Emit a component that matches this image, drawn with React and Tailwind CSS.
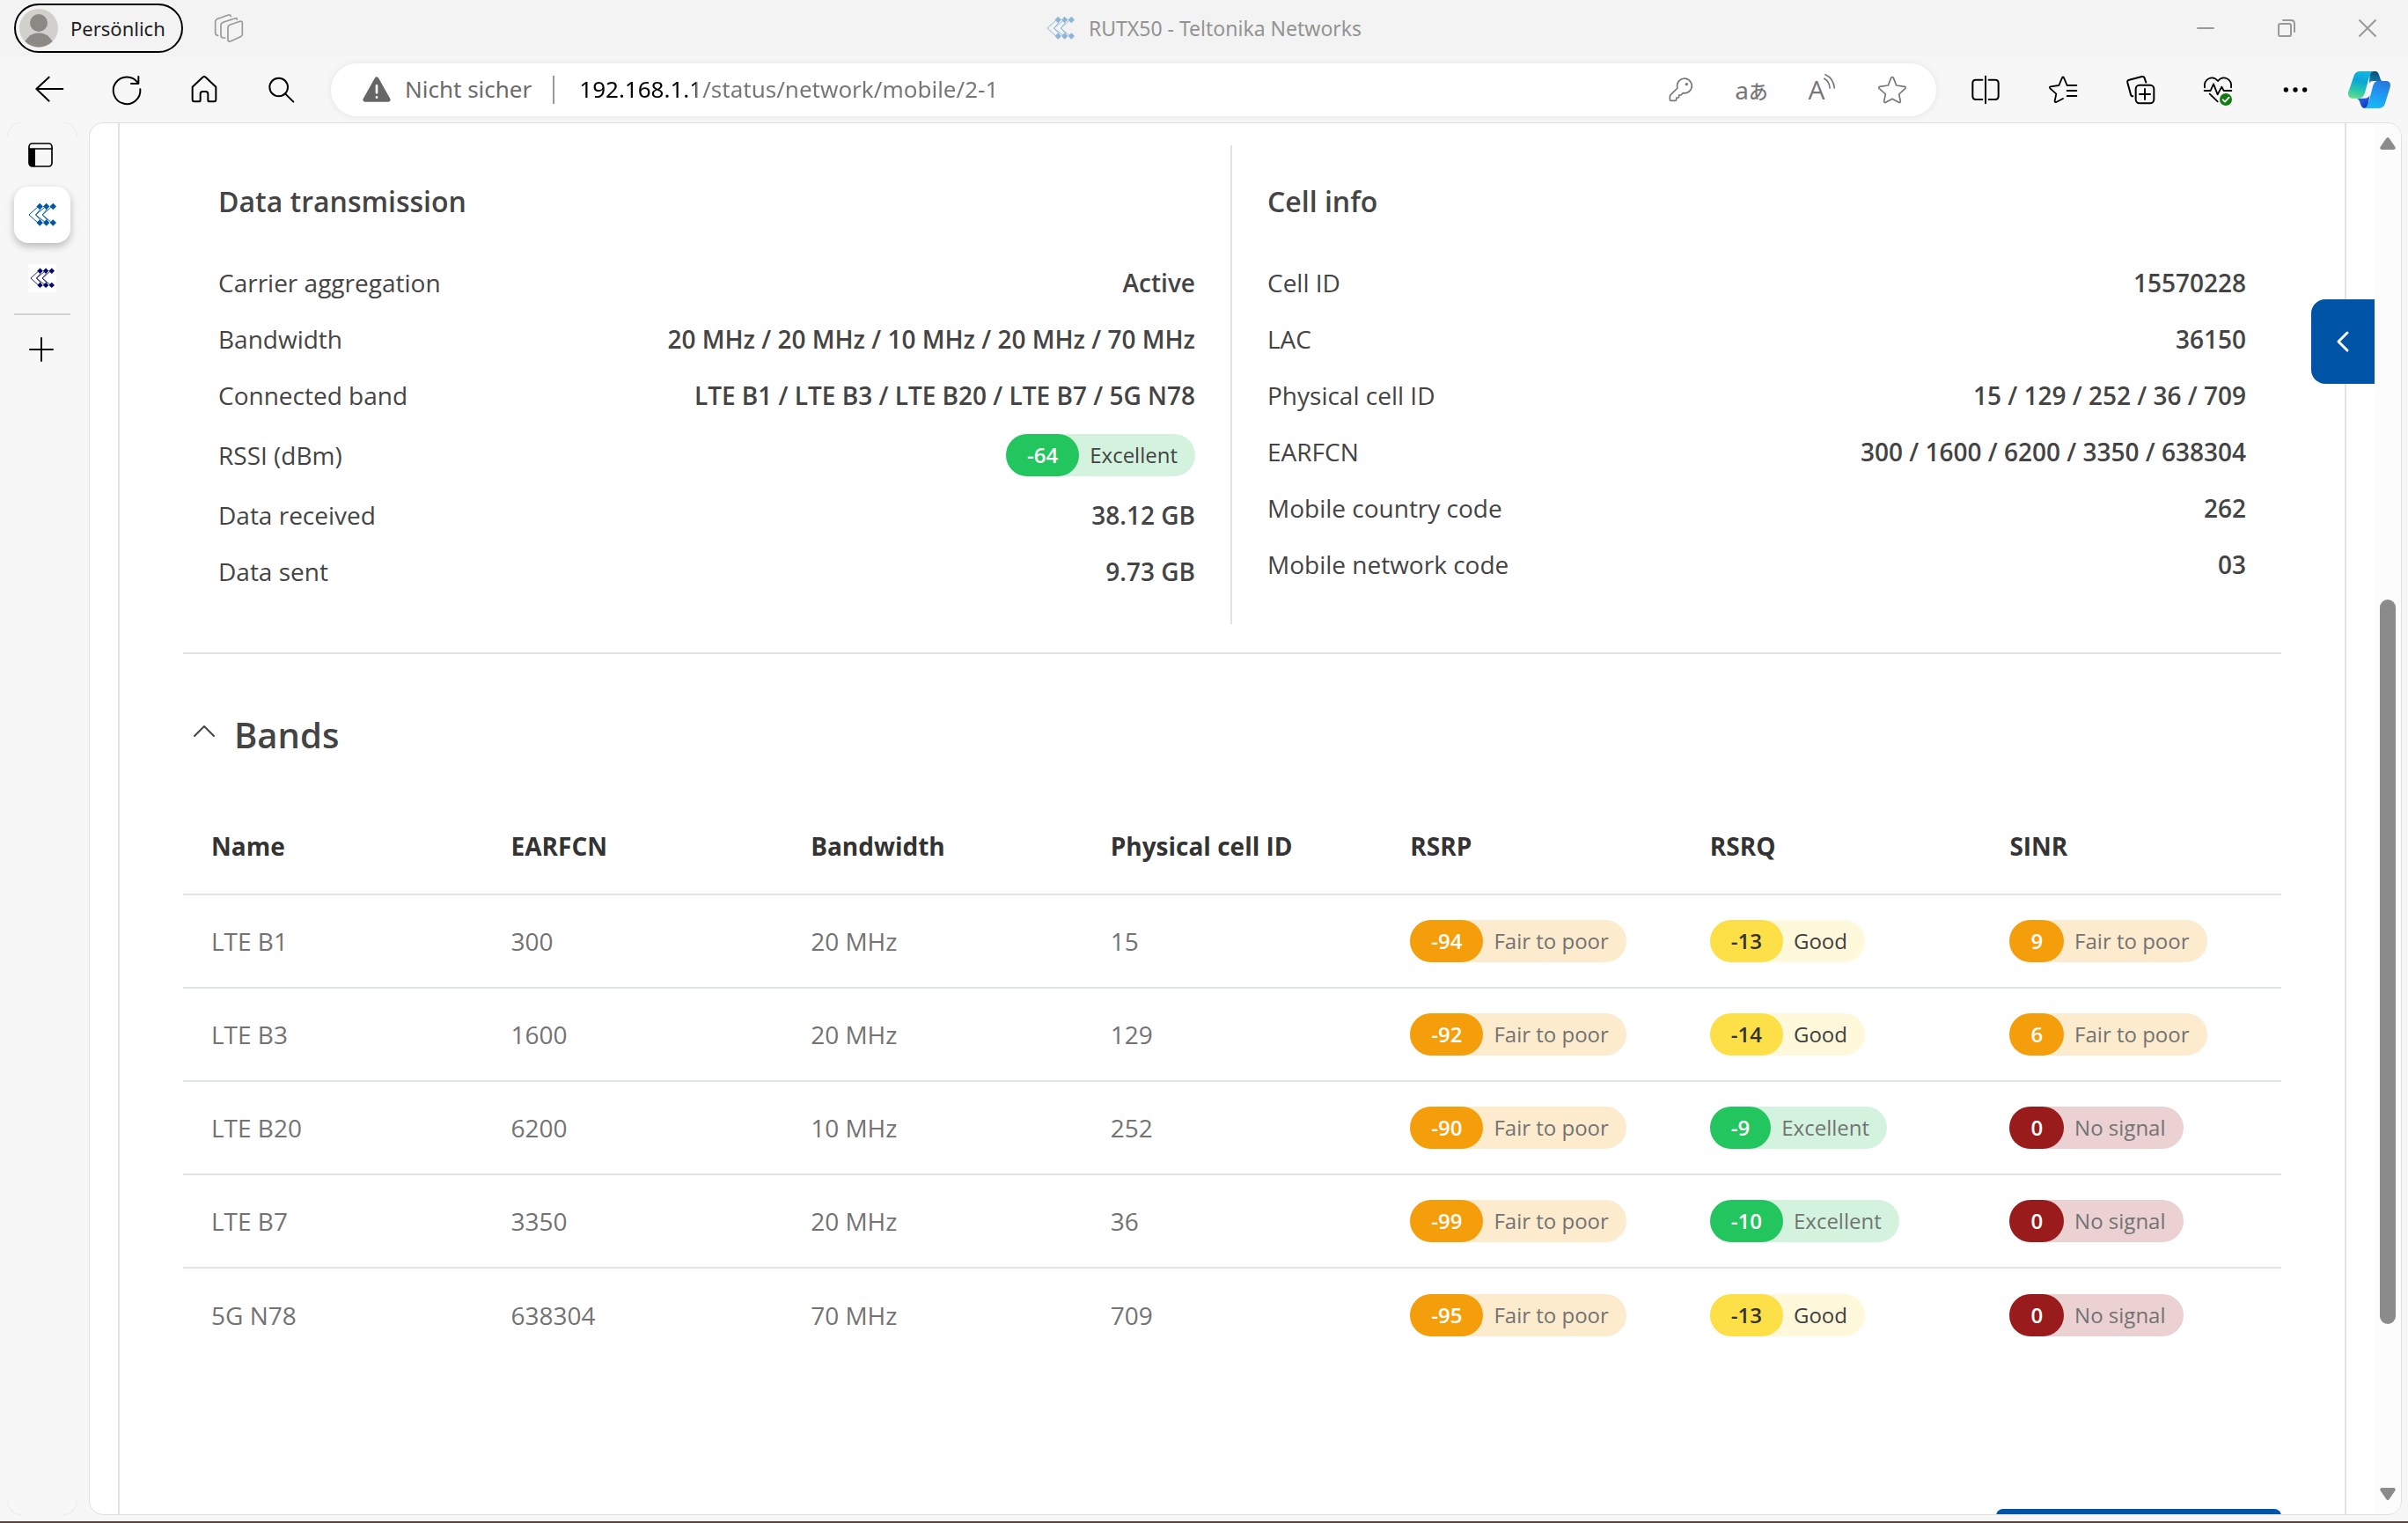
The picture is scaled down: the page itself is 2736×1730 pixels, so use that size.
const transmission = [
  ["Carrier aggregation", "Active"],
  ["Bandwidth", "20 MHz / 20 MHz / 10 MHz / 20 MHz / 70 MHz"],
  ["Connected band", "LTE B1 / LTE B3 / LTE B20 / LTE B7 / 5G N78"],
  ["RSSI (dBm)", { level: "excellent", value: "-64" }],
  ["Data received", "38.12 GB"],
  ["Data sent", "9.73 GB"],
];

const cellInfo = [
  ["Cell ID", "15570228"],
  ["LAC", "36150"],
  ["Physical cell ID", "15 / 129 / 252 / 36 / 709"],
  ["EARFCN", "300 / 1600 / 6200 / 3350 / 638304"],
  ["Mobile country code", "262"],
  ["Mobile network code", "03"],
];

const columns = ["Name", "EARFCN", "Bandwidth", "Physical cell ID", "RSRP", "RSRQ", "SINR"];

const bands = [
  ["LTE B1", "300", "20 MHz", "15", ["fair", "-94"], ["good", "-13"], ["fair", "9"]],
  ["LTE B3", "1600", "20 MHz", "129", ["fair", "-92"], ["good", "-14"], ["fair", "6"]],
  ["LTE B20", "6200", "10 MHz", "252", ["fair", "-90"], ["excellent", "-9"], ["none", "0"]],
  ["LTE B7", "3350", "20 MHz", "36", ["fair", "-99"], ["excellent", "-10"], ["none", "0"]],
  ["5G N78", "638304", "70 MHz", "709", ["fair", "-95"], ["good", "-13"], ["none", "0"]],
];

const levels = {
  excellent: { label: "Excellent", wrap: "bg-[#d3f3df]", badge: "bg-[#23c55e] text-white" },
  good: { label: "Good", wrap: "bg-[#fff8da] text-[#404040]", badge: "bg-[#fde047] text-[#333333]" },
  fair: { label: "Fair to poor", wrap: "bg-[#fdebce]", badge: "bg-[#f59e0b] text-white" },
  none: { label: "No signal", wrap: "bg-[#ebd1d1]", badge: "bg-[#991b1b] text-white" },
};

function SignalPill({ level, value }) {
  const l = levels[level];
  return (
    <span className={`inline-flex h-12 items-center rounded-full pr-5 align-middle text-[24px] leading-[48px] font-normal ${l.wrap}`}>
      <span className={`h-12 rounded-full px-6 font-semibold ${l.badge}`}>{value}</span>
      <span className="ml-3">{l.label}</span>
    </span>
  );
}

function Icon({ children, className = "size-8", width = 6, box = "0 0 96 96" }) {
  return (
    <svg
      viewBox={box}
      className={`shrink-0 overflow-visible ${className}`}
      fill="none"
      stroke="currentColor"
      strokeWidth={width}
      strokeLinecap="round"
      strokeLinejoin="round"
      aria-hidden="true"
    >
      {children}
    </svg>
  );
}

function NetworkLogo({ className }) {
  return (
    <svg viewBox="0 0 32 32" className={`shrink-0 ${className}`} fill="none" stroke="currentColor" strokeWidth="1" aria-hidden="true">
      <path d="M11.500 6.500 1 16l10.500 9.500" />
      <path d="M14 9.500 8.500 16l6 6.500M20 6.500 8.500 16 20 25M21.500 9.500 16.200 16l6 6.500M27 6.500 16.200 16 27 25" strokeWidth="0.9" />
      <path
        stroke="none"
        fill="currentColor"
        d="M13.200 2.800l3.700 3.700-3.700 3.700-3.700-3.700zM20.700 2.800l3.700 3.700-3.700 3.700-3.700-3.700zM28.300 2.800l3.700 3.700-3.700 3.700-3.700-3.700zM13.200 21.300l3.700 3.700-3.700 3.700-3.700-3.700zM20.700 21.300l3.700 3.700-3.700 3.700-3.700-3.700zM28.300 21.300l3.700 3.700-3.700 3.700-3.700-3.700z"
      />
    </svg>
  );
}

function AssistantLogo() {
  return (
    <svg viewBox="0 0 144 126" className="h-[42px] w-12" aria-hidden="true">
      <defs>
        <linearGradient id="leftRibbon" x1="0.5" y1="0" x2="0.3" y2="1">
          <stop offset="0" stopColor="#0fb6e0" />
          <stop offset="0.35" stopColor="#0aa5d6" />
          <stop offset="0.7" stopColor="#27c8ae" />
          <stop offset="1" stopColor="#62dc8c" />
        </linearGradient>
        <linearGradient id="rightRibbon" x1="0.6" y1="0" x2="0.3" y2="1">
          <stop offset="0" stopColor="#2a78dc" />
          <stop offset="0.5" stopColor="#1e9af5" />
          <stop offset="1" stopColor="#16bdf3" />
        </linearGradient>
        <linearGradient id="topFold" x1="0.6" y1="0" x2="0.4" y2="1">
          <stop offset="0" stopColor="#0b4a70" />
          <stop offset="1" stopColor="#1280b4" />
        </linearGradient>
        <linearGradient id="lowFold" x1="0" y1="0" x2="0.6" y2="1">
          <stop offset="0" stopColor="#2b7ce8" />
          <stop offset="1" stopColor="#1535c8" />
        </linearGradient>
      </defs>
      <path fill="url(#topFold)" d="M74 0h18c8 0 11 5 14 14l4 12c2 5 4 7 8 7H86c-8 0-10 2-14 8z" />
      <path fill="url(#lowFold)" d="M28 92h28c8 0 14-3 18-12l-8 44c-10 4-18 2-22-8-4-9-4-20-16-24z" />
      <path fill="url(#leftRibbon)" d="M42 0h44c-9 3-12 12-15 22L58 70c-4 15-10 22-22 22H16C2 92-2 82 1 70L20 14C24 4 31 0 42 0z" />
      <path fill="url(#rightRibbon)" d="M102 33h26c14 0 18 9 15 22l-18 57c-4 10-11 14-22 14H54c9-3 13-10 16-20l14-54c4-13 9-19 18-19z" />
    </svg>
  );
}

function ToolButton({ label, children, className = "w-[88px]" }) {
  return (
    <button type="button" aria-label={label} className={`flex h-full items-center justify-center ${className}`}>
      {children}
    </button>
  );
}

function TitleBar() {
  return (
    <header className="grid h-16 shrink-0 grid-cols-[1fr_auto_1fr] items-center bg-[#f3f3f3] font-['Noto_Sans',sans-serif]">
      <div className="flex items-center pl-4">
        <button type="button" className="flex h-14 items-center gap-3.5 rounded-full border-2 border-black pr-[18px] pl-1 text-[22px] text-[#1f1f1f]">
          <svg viewBox="0 0 44 44" className="size-[44px]" aria-hidden="true">
            <clipPath id="avatar"><circle cx="22" cy="22" r="21.500" /></clipPath>
            <circle cx="22" cy="22" r="22" fill="#d2d0cc" />
            <circle cx="22" cy="16" r="10" fill="#8c8985" />
            <circle cx="22" cy="45" r="17.500" fill="#8c8985" clipPath="url(#avatar)" />
          </svg>
          Persönlich
        </button>
        <button type="button" aria-label="Tab actions" className="ml-9 text-[#999999]">
          <Icon width={5}>
            <path d="M45 45q0-6 6-8l35-12q8-2 8 5v39q0 6-6 8L53 93q-8 2-8-5Z" />
            <path d="M76 19q0-7-8-4L29 28q-8 3-8 10v35q0 8 8 8h6M55 8q-1-7-8-5L10 16q-8 3-8 10v38q0 8 9 9" />
          </Icon>
        </button>
      </div>
      <div className="flex items-center gap-4 text-[23px] text-[#939393]">
        <NetworkLogo className="size-8 text-[#8fb4d9]" />
        <span>RUTX50 - Teltonika Networks</span>
      </div>
      <div className="flex h-full justify-end text-[#999999]">
        <ToolButton label="Minimise" className="w-[92px]">
          <Icon className="size-5" box="0 0 20 20" width={2}><path d="M1 10h18" /></Icon>
        </ToolButton>
        <ToolButton label="Restore" className="w-[92px]">
          <Icon className="size-5" box="0 0 20 20" width={2}>
            <rect x="1" y="5" width="14" height="14" rx="2" />
            <path d="M6 1h9q4 0 4 4v9" />
          </Icon>
        </ToolButton>
        <ToolButton label="Close" className="w-[92px]">
          <Icon className="size-5" box="0 0 20 20" width={2}><path d="M1 1l18 18M19 1 1 19" /></Icon>
        </ToolButton>
      </div>
    </header>
  );
}

function ToolBar() {
  return (
    <nav className="flex h-[75px] shrink-0 items-center pr-1 pl-3 text-black">
      <ToolButton label="Back">
        <Icon><path d="M94 45H4M47 5 4 45l43 41" /></Icon>
      </ToolButton>
      <ToolButton label="Reload">
        <Icon><path d="M94 46A46 46 0 1 1 86 24M88 3v24H63" /></Icon>
      </ToolButton>
      <ToolButton label="Home">
        <Icon><path d="M8 38 43 5q5-4 10 0L88 38V82a6 6 0 0 1-6 6H66a5 5 0 0 1-5-5V62a8 8 0 0 0-8-8H43a8 8 0 0 0-8 8V83a5 5 0 0 1-5 5H14a6 6 0 0 1-6-6Z" /></Icon>
      </ToolButton>
      <ToolButton label="Search">
        <Icon><circle cx="38" cy="39" r="31" /><path d="M60 61l28 28" /></Icon>
      </ToolButton>
      <div className="mx-3 flex h-[60px] flex-1 items-center rounded-full bg-white pl-9 font-['Noto_Sans',sans-serif] text-[26px] shadow-[0_0_10px_rgba(0,0,0,0.08)]">
        <button type="button" className="flex items-center gap-4 text-[#6b6b6b]">
          <Icon>
            <path d="M48 11 88 82H8Z" fill="#666666" stroke="#666666" strokeWidth="14" />
            <path d="M48 34v24M48 73v1" stroke="#ffffff" strokeWidth="8" />
          </Icon>
          Nicht sicher
        </button>
        <span className="mx-6 h-8 w-0.5 bg-[#999999]" />
        <input
          type="text"
          aria-label="Address"
          defaultValue="192.168.1.1/status/network/mobile/2-1"
          className="min-w-0 flex-1 bg-[linear-gradient(90deg,#000000_137px,#767676_137px)] bg-clip-text px-1 text-transparent outline-none"
        />
        <div className="flex h-full pr-2.5 text-[#777777]">
          <ToolButton label="Password" className="w-20">
            <Icon width={5}>
              <path d="M36 42 13 65q-3 3-3 7v8q0 5 5 5h12q5 0 5-5v-5h5q4 0 4-4v-5h5q3 0 5-3l4-4a25 25 0 1 0-19-17Z" />
              <circle cx="67" cy="29" r="2.500" fill="currentColor" />
            </Icon>
          </ToolButton>
          <ToolButton label="Translate" className="w-20">
            <span className="text-[28px] leading-8">a</span>
            <span className="font-['Noto_Sans_CJK_JP',sans-serif] text-[22px] leading-8 font-medium">あ</span>
          </ToolButton>
          <ToolButton label="Read aloud" className="w-20">
            <span className="font-['Open_Sans',sans-serif] text-[30px] leading-8">A</span>
            <Icon className="mb-4 h-5 w-3" box="0 0 36 60" width={5}>
              <path d="M-1 16q18 10 19 32M3 2q27 12 31 46" />
            </Icon>
          </ToolButton>
          <ToolButton label="Favourite" className="w-20">
            <Icon width={5}><path d="M44 7q4-5 8 0l10 26 28 4q6 2 2 7L71 63l5 24q0 6-6 4L48 79 26 91q-6 2-6-4l5-24L4 44q-4-5 2-7l28-4Z" /></Icon>
          </ToolButton>
        </div>
      </div>
      <ToolButton label="Split screen">
        <Icon><path d="M48 2v92M37 14H15q-11 0-11 11v44q0 12 11 12h22M59 14h22q11 0 11 11v44q0 12-11 12H59" /></Icon>
      </ToolButton>
      <ToolButton label="Favourites">
        <Icon width={5.5}><path d="M62 33h32M62 51h32M62 69h32M62 33 51 7q-3-5-6 0L34 33 6 37q-6 1-2 6l21 19-5 24q0 6 5 4l23-12" /></Icon>
      </ToolButton>
      <ToolButton label="Collections">
        <Icon>
          <path d="M67 23 62 8q-2-6-9-5L10 14q-8 2-6 10l11 40q1 6 7 6" />
          <rect x="32" y="32" width="62" height="62" rx="13" />
          <path d="M63 45v36M45 63h36" />
        </Icon>
      </ToolButton>
      <ToolButton label="Browser essentials">
        <Icon width={5.5}>
          <path d="M3 40C-1 10 30-3 48 18 66-3 97 10 93 40M2 51h21l10-23 14 36 14-26 7 13h26M20 62l27 26" />
          <circle cx="75" cy="81" r="21" fill="#107c10" stroke="none" />
          <path d="M65 82l7 7 14-15" stroke="#ffffff" />
        </Icon>
      </ToolButton>
      <ToolButton label="More">
        <Icon>
          <g fill="currentColor" stroke="none"><circle cx="16" cy="48" r="8" /><circle cx="48" cy="48" r="8" /><circle cx="80" cy="48" r="8" /></g>
        </Icon>
      </ToolButton>
      <ToolButton label="Assistant" className="w-20"><AssistantLogo /></ToolButton>
    </nav>
  );
}

function SideTabs() {
  return (
    <aside className="relative flex w-[101px] shrink-0 flex-col pl-4">
      <span className="absolute top-0 left-2 size-4 rounded-tl-2xl border-t border-l border-[#ececec]" />
      <span className="absolute top-0 left-18 size-4 rounded-tr-2xl border-t border-r border-[#ececec]" />
      <span className="absolute bottom-0 left-2 size-4 rounded-bl-2xl border-b border-l border-[#ececec]" />
      <span className="absolute bottom-0 left-18 size-4 rounded-br-2xl border-r border-b border-[#ececec]" />
      <div className="flex w-16 flex-col pt-px">
        <button type="button" aria-label="Toggle vertical tabs" className="flex h-[72px] items-center pl-4">
          <Icon className="size-7" box="0 0 84 84" width={5}>
            <rect x="3" y="3" width="78" height="78" rx="11" />
            <path d="M3 21h78" />
            <path d="M3 21h21v60H13q-10 0-10-10Z" fill="currentColor" stroke="none" />
          </Icon>
        </button>
        <button type="button" aria-label="RUTX50 tab" className="flex h-16 items-center justify-center rounded-2xl bg-white shadow-[0_4px_10px_rgba(0,0,0,0.25)]">
          <NetworkLogo className="size-8 text-[#0056a9]" />
        </button>
        <button type="button" aria-label="Second tab" className="mt-2 flex h-16 items-center justify-center">
          <span className="flex size-8 items-center justify-center bg-white"><NetworkLogo className="size-7 text-[#020a6e]" /></span>
        </button>
        <hr className="mt-2 border-t-2 border-[#d0d0d0]" />
        <button type="button" aria-label="New tab" className="flex h-[78px] items-center pl-[17px]">
          <Icon className="size-7" box="0 0 28 28" width={2}><path d="M14 1v26M1 14h26" /></Icon>
        </button>
      </div>
    </aside>
  );
}

function InfoList({ title, rows, className = "" }) {
  return (
    <section className={`px-10 pt-10 pb-7 ${className}`}>
      <h2 className="mb-9 text-[32px] leading-[48px] font-semibold">{title}</h2>
      <dl>
        {rows.map(([label, value]) => (
          <div key={label} className="flex items-center justify-between py-3">
            <dt>{label}</dt>
            <dd className="font-semibold">{typeof value === "string" ? value : <SignalPill {...value} />}</dd>
          </div>
        ))}
      </dl>
    </section>
  );
}

function BandsTable() {
  return (
    <table className="w-full table-fixed text-left">
      <thead>
        <tr className="h-[109px] border-b-2 border-[#dfe4ec] text-[#333333]">
          {columns.map((c) => (
            <th key={c} scope="col" className="pl-8 font-bold">{c}</th>
          ))}
        </tr>
      </thead>
      <tbody>
        {bands.map((row) => (
          <tr key={row[0]} className="h-[106px] border-b-2 border-[#dfe4ec] text-[#737373] last:border-0">
            {row.map((cell, i) => (
              <td key={columns[i]} className="pl-8">
                {typeof cell === "string" ? cell : <SignalPill level={cell[0]} value={cell[1]} />}
              </td>
            ))}
          </tr>
        ))}
      </tbody>
    </table>
  );
}

function ScrollBar() {
  return (
    <div className="flex w-[30px] shrink-0 flex-col items-center bg-[#fcfcfc] py-4 text-[#8b8b8b]">
      <button type="button" aria-label="Scroll up">
        <svg viewBox="0 0 18 14" className="h-3.5 w-[18px]" fill="currentColor"><path d="M7 1.500q2-3 4 0l6.500 9.500q1 3-2 3h-13q-3 0-2-3z" /></svg>
      </button>
      <div className="flex w-[18px] flex-1 flex-col">
        <span className="flex-[511]" />
        <span className="flex-[823] rounded-full bg-[#8b8b8b]" />
        <span className="flex-[186]" />
      </div>
      <button type="button" aria-label="Scroll down">
        <svg viewBox="0 0 18 14" className="h-3.5 w-[18px] rotate-180" fill="currentColor"><path d="M7 1.500q2-3 4 0l6.500 9.500q1 3-2 3h-13q-3 0-2-3z" /></svg>
      </button>
    </div>
  );
}

export default function App() {
  return (
    <div className="flex h-screen flex-col overflow-hidden border-b-2 border-[#54423c] bg-[#f7f7f7]">
      <TitleBar />
      <ToolBar />
      <div className="flex min-h-0 flex-1 pr-[7px] pb-[7px]">
        <SideTabs />
        <div className="relative flex min-w-0 flex-1 overflow-hidden rounded-2xl border border-[#e0e0e0] bg-white">
          <main className="mr-8 ml-8 min-w-0 flex-1 overflow-hidden border-x-2 border-[#e2e2e2] px-[72px] pt-[25px] font-['Open_Sans',sans-serif] text-[28px] leading-[40px] text-[#444444]">
            <div className="grid grid-cols-2">
              <InfoList title="Data transmission" rows={transmission} className="border-r-2 border-[#e2e2e2]" />
              <InfoList title="Cell info" rows={cellInfo} />
            </div>
            <hr className="mt-8 border-t-2 border-[#e1e5ea]" />
            <h2 className="mt-[60px] mb-10 text-[40px] leading-[64px] font-semibold">
              <button type="button" aria-expanded="true" className="flex items-center gap-[22px] pl-3">
                <Icon className="mb-2.5 h-3 w-6" box="0 0 24 12" width={2}><path d="M1 12 12 1l11 11" /></Icon>
                Bands
              </button>
            </h2>
            <BandsTable />
            <div className="mt-[168px] flex justify-end">
              <button type="button" aria-label="Save" className="h-20 w-[324px] rounded-lg bg-[#0054a6]" />
            </div>
          </main>
          <button type="button" aria-label="Open side panel" className="absolute top-[200px] right-[30px] flex h-24 w-[72px] items-center justify-center rounded-l-2xl bg-[#0054a6] text-white">
            <Icon className="h-[22px] w-3.5" box="0 0 14 22" width={3}><path d="M12 1 2 11l10 10" /></Icon>
          </button>
          <ScrollBar />
        </div>
      </div>
    </div>
  );
}
